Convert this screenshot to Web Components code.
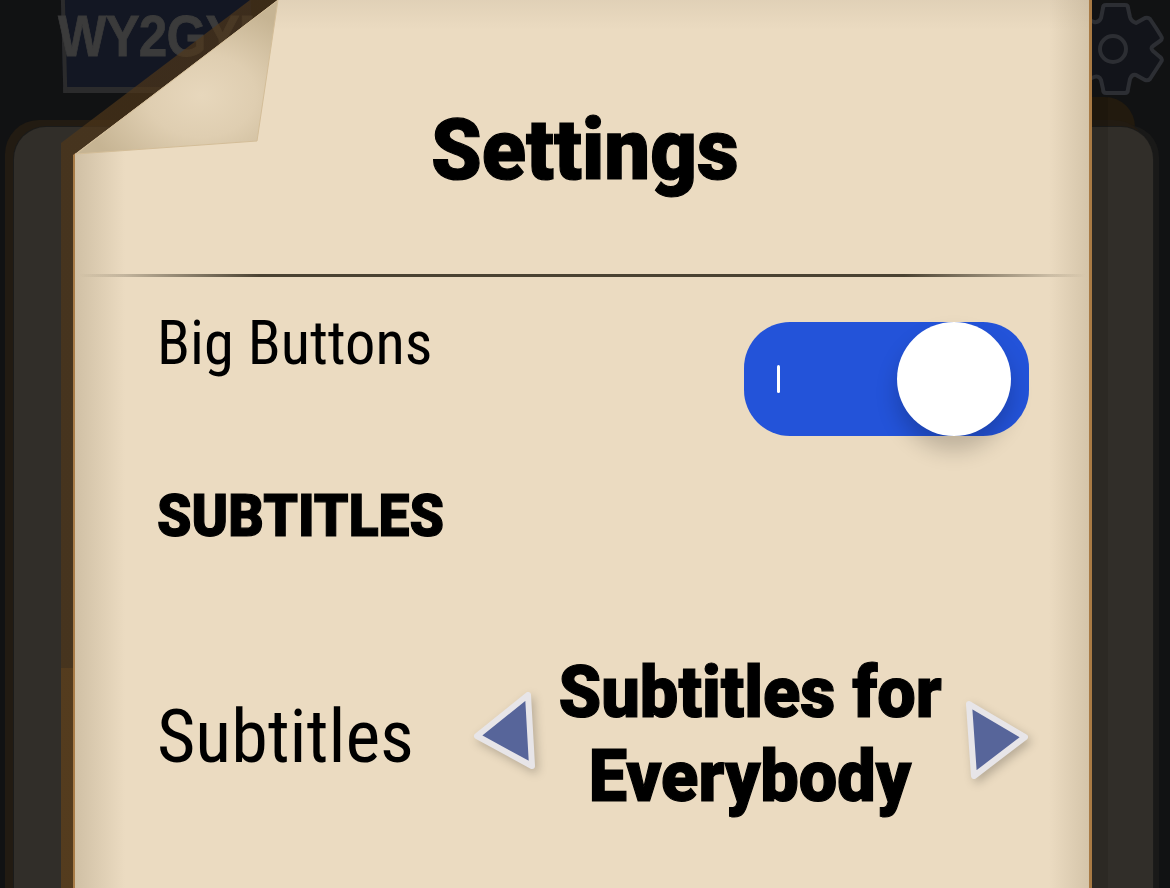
<!DOCTYPE html>
<html><head><meta charset="utf-8"><title>Settings</title>
<style>
html,body{margin:0;padding:0;width:1170px;height:888px;overflow:hidden;background:#111213;font-family:Roboto,"Liberation Sans",sans-serif;color:#000}
</style></head><body>
<game-backdrop></game-backdrop>
<paper-sheet>
  <page-title slot="title">Settings</page-title>
  <setting-row top="35" height="124">
    <span-label style="--size:60.5px;padding-top:2px">Big Buttons</span-label>
    <toggle-switch slot="control"></toggle-switch>
  </setting-row>
  <section-heading>SUBTITLES</section-heading>
  <setting-row top="109" height="160" center>
    <span-label style="--size:74px;padding-top:4px">Subtitles</span-label>
    <option-picker slot="control"><span>Subtitles for<br>Everybody</span></option-picker>
  </setting-row>
</paper-sheet>
<script>
function def(name, html, init){
  customElements.define(name, class extends HTMLElement{
    constructor(){super();this.attachShadow({mode:'open'}).innerHTML=html;}
    connectedCallback(){init&&init(this);}
  });
}
def('game-backdrop',`<style>
:host{position:absolute;inset:0;display:block;overflow:hidden}
.logo{position:absolute;left:62px;top:-8px;width:190px;height:101px;box-sizing:border-box;background:#131723;border:solid #2b2b2c;border-width:0 0 6px 4px;transform:skewX(1.5deg)}
.txt{position:absolute;left:58px;top:8px;font:700 57px/1 "Liberation Sans",sans-serif;color:#3b3b3b;-webkit-text-stroke:.8px #3b3b3b;letter-spacing:-1px;white-space:nowrap;transform:scaleX(.9);transform-origin:left}
.card{position:absolute;left:14px;top:127px;width:1139px;height:900px;border-radius:32px;background:#312e29;box-shadow:0 0 0 1px #1b1b1a,-7px -5px 0 2px #221b12,6px -2px 0 0 #191918}
.shade{position:absolute;left:1092px;top:97px;width:16px;height:791px;background:#000;opacity:.1}
.glow{position:absolute;left:1085px;top:97px;width:50px;height:32px;background:#221a0e;border-radius:0 30px 0 0}
svg{position:absolute;left:1070px;top:0}
</style>
<div class="logo"></div><div class="txt">WY2GYM</div>
<div class="glow"></div><div class="card"></div><div class="shade"></div>
<svg width="100" height="96" viewBox="0 0 100 96" fill="#12141a" stroke="#2c2e33" stroke-width="4" stroke-linejoin="round">
<path d="M33 8Q33 5 36 5H55Q58 5 58 8L60 17Q61 21 66 23L75 18Q78 17 80 19L86 28L91 36Q93 39 90 41L83 46Q80 48 83 51L90 57Q93 59 91 62L80 79Q78 81 75 80L66 75Q62 74 60 79L58 89Q58 93 55 93H36Q33 93 33 89L31 80Q29 75 24 77L15 81Q12 82 10 79L0 62V36L10 19Q12 17 15 18L24 22Q29 23 31 18Z"/>
<circle cx="43" cy="49" r="13"/></svg>`);

def('paper-sheet',`<style>
:host{position:relative;display:block;width:1014px;height:888px;margin-left:75px}
.under{position:absolute;left:-14px;right:-3px;top:0;bottom:0;background:linear-gradient(180deg,rgba(80,55,25,.68) 0 668px,rgba(90,62,28,.85) 668px);clip-path:polygon(0 143px,189px 0,100% 0,100% 100%,0 100%)}
.edge{position:absolute;left:-2px;right:-3px;top:0;bottom:0;background:linear-gradient(90deg,#a87c48 0 3px,transparent 3px calc(100% - 5px),#a87a44 0);clip-path:polygon(0 155px,204px 0,100% 0,100% 100%,0 100%)}
.sheet{position:absolute;inset:0;box-sizing:border-box;clip-path:polygon(0 154px,203px 0,100% 0,100% 100%,0 100%);
background:linear-gradient(90deg,rgba(190,174,146,.6),rgba(190,174,146,0) 50px,rgba(190,174,146,0) calc(100% - 40px),rgba(190,174,146,.5)),linear-gradient(180deg,rgba(200,185,160,.3),rgba(200,185,160,0) 30px),#ebdbc1}
.fold{position:absolute;left:0;top:0;width:204px;height:155px;z-index:1;overflow:visible}
.body{position:relative;box-sizing:border-box;height:100%;display:flex;flex-direction:column}
.head{height:274px;box-sizing:border-box;padding:107px 0 0 5px;display:flex;align-items:flex-start;justify-content:center}
.rule{height:3px;margin:0 4px;background:linear-gradient(90deg,transparent,#4a4232 18%,#4a4232 82%,transparent)}
.rows{padding:0 60px 0 82px;display:flex;flex-direction:column}
</style>
<div class="under"></div><div class="edge"></div><div class="sheet"></div>
<svg class="fold" viewBox="0 0 204 155"><defs><radialGradient id="f" cx="62%" cy="62%" r="60%"><stop offset="0" stop-color="#e7d7bc"/><stop offset=".45" stop-color="#dfceb1"/><stop offset="1" stop-color="#c6b493"/></radialGradient></defs>
<polygon points="1,154 203,0 182,141" fill="url(#f)" stroke="#d3bd98" stroke-width="1"/></svg>
<div class="body"><div class="head"><slot name="title"></slot></div><div class="rule"></div><div class="rows"><slot></slot></div></div>`);

const textBase=`white-space:nowrap;font-family:Roboto,"Liberation Sans",sans-serif;`;
const heavy=`font-weight:900;-webkit-text-stroke:1.2px #000;`;
def('page-title',`<style>:host{display:block;${textBase}${heavy}font-size:86px;line-height:86px;transform:scaleX(.945)}</style><slot></slot>`);
def('span-label',`<style>:host{display:block;${textBase}font-stretch:75%;font-size:var(--size,62px);font-weight:400;line-height:1}</style><slot></slot>`);
def('section-heading',`<style>:host{display:block;${textBase}${heavy}font-size:60px;line-height:60px;margin-top:50px;transform:scaleX(.92);transform-origin:left}</style><slot></slot>`);
def('setting-row',`<style>:host{display:flex;justify-content:space-between;align-items:flex-start}
:host([center]){align-items:center}</style><slot></slot><slot name="control"></slot>`,el=>{
  el.style.marginTop=el.getAttribute('top')+'px';el.style.height=el.getAttribute('height')+'px';
});
def('toggle-switch',`<style>:host{display:flex;align-items:center;width:285px;height:114px;margin-top:10px;box-sizing:border-box;padding:0 18px 0 33px;border-radius:46px;background:#2353d9;justify-content:space-between}
.i{width:2.5px;height:28px;background:#fff;border-radius:2px}
.k{width:114px;height:114px;border-radius:50%;background:#fff;box-shadow:0 14px 22px rgba(0,0,0,.2)}</style><div class="i"></div><div class="k"></div>`);
const tri=(pts)=>`<svg width="66" height="100" viewBox="0 0 66 100" style="overflow:visible;filter:drop-shadow(3px 4px 5px rgba(0,0,0,.22));flex:none"><polygon points="${pts}" fill="#57659a" stroke="#e7e5e8" stroke-width="6" stroke-linejoin="round"/></svg>`;
def('option-picker',`<style>:host{display:flex;align-items:center;gap:10px;${textBase}${heavy}font-size:72px;line-height:84px;text-align:center}
.t{width:440px;margin:0 -17px 0 -23px;flex:none;transform:scaleX(.95)}</style>${tri('0,51 51,10 55,81')}<div class="t"><slot></slot></div>${tri('6,19 62,52 11,91')}`);
</script>
</body></html>
